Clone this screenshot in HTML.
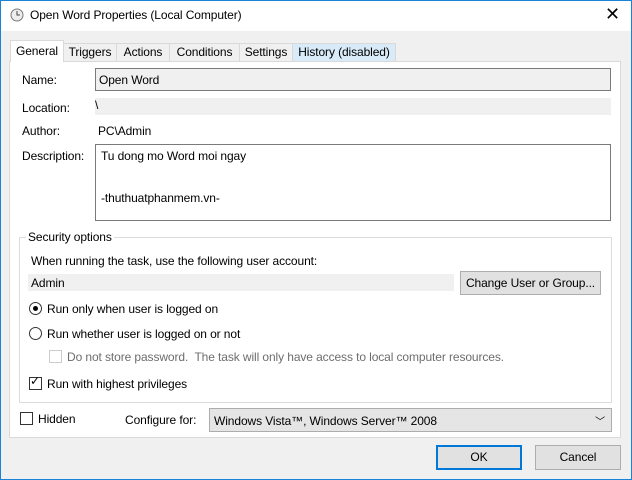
<!DOCTYPE html><html><head><style>
body{margin:0;width:632px;height:480px;overflow:hidden;font-family:"Liberation Sans",sans-serif;font-size:12px;color:#000;letter-spacing:-0.1px}
.w{position:absolute;left:0;top:0;width:632px;height:480px;background:#f0f0f0}
.a{position:absolute}
.tab{position:absolute;top:43px;height:17px;border:1px solid #d9d9d9;border-bottom:none;background:#f0f0f0;text-align:center;line-height:17px}
.box{position:absolute;box-sizing:border-box}
.rad{position:absolute;width:11px;height:11px;border:1px solid #333;border-radius:50%;background:#fff}
.chk{position:absolute;width:11px;height:11px;border:1px solid #333;background:#fff}
.btn{position:absolute;box-sizing:border-box;border:1px solid #adadad;background:#e1e1e1;text-align:center}
</style></head><body><div class="w">
<div class="a" style="left:0;top:0;width:632px;height:31px;background:#fff"></div>
<svg class="a" style="left:10px;top:8px" width="14" height="14"><circle cx="7" cy="7" r="6" fill="#eee" stroke="#777"/><path d="M7 3v4h3" stroke="#444" fill="none"/></svg>
<div class="a" style="left:30px;top:8px">Open Word Properties (Local Computer)</div>
<div class="a" style="left:605px;top:4px;font-size:18px">✕</div>
<div class="box" style="left:9px;top:61px;width:612px;height:377px;background:#fff;border:1px solid #d9d9d9"></div>
<div class="tab" style="left:10px;top:40px;height:21px;width:52px;background:#fff;z-index:2;line-height:21px">General</div>
<div class="tab" style="left:63px;width:52px">Triggers</div>
<div class="tab" style="left:116px;width:52px">Actions</div>
<div class="tab" style="left:169px;width:69px">Conditions</div>
<div class="tab" style="left:239px;width:52px">Settings</div>
<div class="tab" style="left:292px;width:102px;background:#d9eaf8">History (disabled)</div>
<div class="a" style="left:22px;top:73px">Name:</div>
<div class="box" style="left:95px;top:68px;width:516px;height:23px;border:1px solid #7a7a7a;background:#f0f0f0;padding:4px 3px">Open Word</div>
<div class="a" style="left:22px;top:101px">Location:</div>
<div class="box" style="left:95px;top:98px;width:516px;height:17px;background:#f0f0f0">\</div>
<div class="a" style="left:22px;top:124px">Author:</div>
<div class="a" style="left:98px;top:124px">PC\Admin</div>
<div class="a" style="left:22px;top:149px">Description:</div>
<div class="box" style="left:95px;top:144px;width:516px;height:77px;border:1px solid #7a7a7a;background:#fff;padding:4px 5px;line-height:14px">Tu dong mo Word moi ngay<br><br><br>-thuthuatphanmem.vn-</div>
<div class="box" style="left:19px;top:237px;width:593px;height:166px;border:1px solid #dcdcdc"></div>
<div class="a" style="left:26px;top:230px;background:#fff;padding:0 2px">Security options</div>
<div class="a" style="left:31px;top:254px">When running the task, use the following user account:</div>
<div class="box" style="left:28px;top:274px;width:426px;height:17px;background:#f0f0f0;padding:2px 3px">Admin</div>
<div class="btn" style="left:460px;top:271px;width:141px;height:24px;line-height:22px">Change User or Group...</div>
<div class="rad" style="left:29px;top:302px"></div><div class="a" style="left:33px;top:306px;width:5px;height:5px;border-radius:50%;background:#000"></div>
<div class="a" style="left:47px;top:302px">Run only when user is logged on</div>
<div class="rad" style="left:29px;top:327px"></div>
<div class="a" style="left:47px;top:327px">Run whether user is logged on or not</div>
<div class="chk" style="left:49px;top:350px;border-color:#ccc"></div>
<div class="a" style="left:67px;top:350px;color:#6d6d6d">Do not store password.&nbsp; The task will only have access to local computer resources.</div>
<div class="chk" style="left:29px;top:377px"></div><div class="a" style="left:30px;top:374px;font-size:12px">✓</div>
<div class="a" style="left:47px;top:377px">Run with highest privileges</div>
<div class="chk" style="left:20px;top:412px"></div>
<div class="a" style="left:38px;top:412px">Hidden</div>
<div class="a" style="left:125px;top:413px">Configure for:</div>
<div class="box" style="left:209px;top:408px;width:403px;height:24px;border:1px solid #adadad;background:#e5e5e5;padding:5px 4px">Windows Vista™, Windows Server™ 2008<span style="position:absolute;right:6px;top:4px;font-size:10px">﹀</span></div>
<div class="btn" style="left:436px;top:445px;width:86px;height:25px;line-height:21px;border:2px solid #0078d7">OK</div>
<div class="btn" style="left:535px;top:445px;width:86px;height:25px;line-height:23px">Cancel</div>
<div class="box" style="left:0;top:0;width:632px;height:480px;border:1px solid #1883d7"></div>
</div></body></html>
